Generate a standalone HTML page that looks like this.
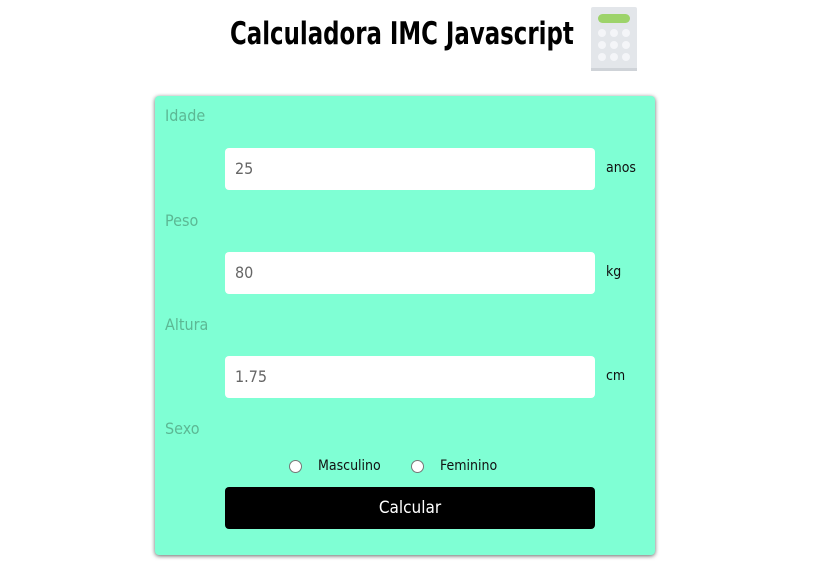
<!DOCTYPE html>
<html><head><meta charset="utf-8"><style>
body{margin:0;width:816px;height:569px;background:#fff;font-family:"DejaVu Sans Condensed","Liberation Sans",sans-serif;position:relative;overflow:hidden}
.t{position:absolute;left:230px;top:16px;font-size:31px;font-weight:bold;color:#000;white-space:nowrap;transform:scaleX(0.82);transform-origin:0 0}
.card{position:absolute;left:155px;top:96px;width:500px;height:459px;background:#7fffd4;border-radius:4px;box-shadow:0 1px 4px rgba(0,0,0,.6)}
.l{position:absolute;left:10px;font-size:16px;color:#5cb894}
.in{position:absolute;left:70px;width:370px;height:42px;background:#fff;border-radius:4px;box-sizing:border-box;padding-left:10px;line-height:42px;font-size:16px;color:#666}
.u{position:absolute;left:451px;font-size:14px;color:#111}
.r{position:absolute;top:364px;width:11px;height:11px;border-radius:50%;border:1px solid #777;background:#fff}
.rt{position:absolute;top:362px;font-size:14px;color:#111}
.btn{position:absolute;left:70px;top:391px;width:370px;height:42px;background:#000;border-radius:4px;color:#fff;font-size:17px;text-align:center;line-height:42px}
</style></head><body>
<div class="t">Calculadora IMC Javascript</div>
<svg style="position:absolute;left:591px;top:7px" width="46" height="64" viewBox="0 0 46 64">
<rect x="0" y="0" width="46" height="64" rx="2" fill="#e3e6ea"/>
<rect x="0" y="61" width="46" height="3" fill="#cfd3d8"/>
<rect x="7" y="7" width="32" height="9" rx="4.5" fill="#9dd36a"/>
<g fill="#f4f5f8"><circle cx="11" cy="26" r="4"/><circle cx="23" cy="26" r="4"/><circle cx="35" cy="26" r="4"/><circle cx="11" cy="38" r="4"/><circle cx="23" cy="38" r="4"/><circle cx="35" cy="38" r="4"/><circle cx="11" cy="50" r="4"/><circle cx="23" cy="50" r="4"/><circle cx="35" cy="50" r="4"/></g>
</svg>
<div class="card">
<div class="l" style="top:10px">Idade</div>
<div class="in" style="top:52px">25</div><div class="u" style="top:64px">anos</div>
<div class="l" style="top:115px">Peso</div>
<div class="in" style="top:156px">80</div><div class="u" style="top:168px">kg</div>
<div class="l" style="top:219px">Altura</div>
<div class="in" style="top:260px">1.75</div><div class="u" style="top:272px">cm</div>
<div class="l" style="top:323px">Sexo</div>
<div class="r" style="left:134px"></div><div class="rt" style="left:163px">Masculino</div>
<div class="r" style="left:256px"></div><div class="rt" style="left:285px">Feminino</div>
<div class="btn">Calcular</div>
</div>
</body></html>
